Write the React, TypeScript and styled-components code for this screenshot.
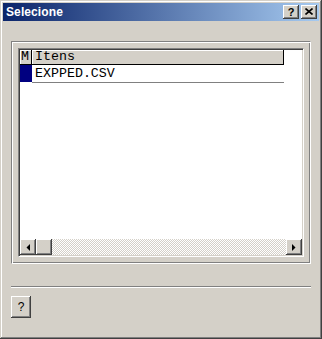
import React from 'react';
import styled, { createGlobalStyle } from 'styled-components';

const Global = createGlobalStyle`
  html, body { margin: 0; padding: 0; background: #d4d0c8; }
  * { box-sizing: border-box; }
`;

const face = '#d4d0c8';

const raised = `
  background: ${face};
  box-shadow: inset -1px -1px #404040, inset 1px 1px #ffffff,
    inset -2px -2px #808080, inset 2px 2px ${face};
`;

const Window = styled.div`
  width: 322px;
  height: 339px;
  padding: 3px;
  display: flex;
  flex-direction: column;
  background: ${face};
  box-shadow: inset -1px -1px #404040, inset 1px 1px ${face},
    inset -2px -2px #808080, inset 2px 2px #ffffff;
  font-family: "Liberation Sans", Arial, sans-serif;
`;

const TitleBar = styled.div`
  height: 18px;
  display: flex;
  align-items: center;
  padding: 0 2px 0 3px;
  background: linear-gradient(to right, #0a246a, #a6caf0);
`;

const Title = styled.span`
  flex: 1;
  color: #fff;
  font-weight: bold;
  font-size: 12px;
  letter-spacing: 0.1px;
`;

const CaptionButtons = styled.div`
  display: flex;
  gap: 2px;
`;

const CaptionButton = styled.div`
  ${raised}
  width: 16px;
  height: 14px;
  display: flex;
  align-items: center;
  justify-content: center;
  font-weight: bold;
  font-size: 11px;
  color: #000;
  padding-bottom: 1px;
`;

const Body = styled.div`
  flex: 1;
  display: flex;
  flex-direction: column;
  padding: 20px 8px 0 8px;
`;

const GroupBox = styled.div`
  height: 223px;
  padding: 6px;
  border-top: 1px solid #808080;
  border-left: 1px solid #808080;
  border-bottom: 1px solid #ffffff;
  border-right: 1px solid #ffffff;
  box-shadow: inset 1px 1px #ffffff, inset -1px -1px #808080;
  display: flex;
`;

const Panel = styled.div`
  flex: 1;
  display: flex;
  flex-direction: column;
  background: #fff;
  border-top: 1px solid #808080;
  border-left: 1px solid #808080;
  border-bottom: 1px solid #ffffff;
  border-right: 1px solid #ffffff;
  box-shadow: inset 1px 1px #404040, inset -1px -1px ${face};
  padding: 1px;
`;

const Row = styled.div<{ $h: number }>`
  display: flex;
  height: ${(p) => p.$h}px;
`;

const HeaderCell = styled.div<{ $w: number }>`
  width: ${(p) => p.$w}px;
  background: ${face};
  border-right: 1px solid #000;
  border-bottom: 1px solid #000;
  box-shadow: inset 1px 1px #ffffff;
  font-family: "Liberation Mono", "Courier New", monospace;
  font-size: 13.3px;
  line-height: 14px;
  padding-left: ${(p) => (p.$w > 20 ? 3 : 1)}px;
  color: #000;
  overflow: hidden;
`;

const Marker = styled.div`
  width: 12px;
  height: 17px;
  background: #000080;
`;

const DataCell = styled.div`
  width: 252px;
  border-bottom: 1px solid #808080;
  font-family: "Liberation Mono", "Courier New", monospace;
  font-size: 13.3px;
  line-height: 18px;
  padding-left: 3px;
  color: #000;
`;

const Spacer = styled.div`
  flex: 1;
`;

const ScrollBar = styled.div`
  height: 16px;
  display: flex;
`;

const ScrollButton = styled.div`
  ${raised}
  width: 16px;
  height: 16px;
  display: flex;
  align-items: center;
  justify-content: center;
`;

const Track = styled.div`
  flex: 1;
  background: repeating-conic-gradient(#ffffff 0 25%, ${face} 0 50%) 0 0 / 2px 2px;
`;

const Separator = styled.div`
  margin-top: 22px;
  height: 2px;
  border-top: 1px solid #808080;
  border-bottom: 1px solid #ffffff;
`;

const HelpButton = styled.div`
  ${raised}
  margin-top: 8px;
  width: 20px;
  height: 22px;
  display: flex;
  align-items: center;
  justify-content: center;
  font-family: "Liberation Sans", Arial, sans-serif;
  font-size: 12px;
  color: #000;
`;

const Arrow = ({ dir }: { dir: 'left' | 'right' }) => (
  <svg width={4} height={7} viewBox="0 0 4 7">
    {dir === 'left' ? <polygon points="4,0 4,7 0.5,3.5" fill="#000" /> : <polygon points="0,0 0,7 3.5,3.5" fill="#000" />}
  </svg>
);

const CloseGlyph = () => (
  <svg width={8} height={7} viewBox="0 0 8 7">
    <path d="M0.5 0.5 L7.5 6.5 M7.5 0.5 L0.5 6.5" stroke="#000" strokeWidth={1.6} />
  </svg>
);

export default function App() {
  return (
    <Window>
      <Global />
      <TitleBar>
        <Title>Selecione</Title>
        <CaptionButtons>
          <CaptionButton>?</CaptionButton>
          <CaptionButton>
            <CloseGlyph />
          </CaptionButton>
        </CaptionButtons>
      </TitleBar>
      <Body>
        <GroupBox>
          <Panel>
            <Row $h={15}>
              <HeaderCell $w={12}>M</HeaderCell>
              <HeaderCell $w={252}>Itens</HeaderCell>
            </Row>
            <Row $h={18}>
              <Marker />
              <DataCell>EXPPED.CSV</DataCell>
            </Row>
            <Spacer />
            <ScrollBar>
              <ScrollButton>
                <Arrow dir="left" />
              </ScrollButton>
              <ScrollButton />
              <Track />
              <ScrollButton>
                <Arrow dir="right" />
              </ScrollButton>
            </ScrollBar>
          </Panel>
        </GroupBox>
        <Separator />
        <HelpButton>?</HelpButton>
      </Body>
    </Window>
  );
}
